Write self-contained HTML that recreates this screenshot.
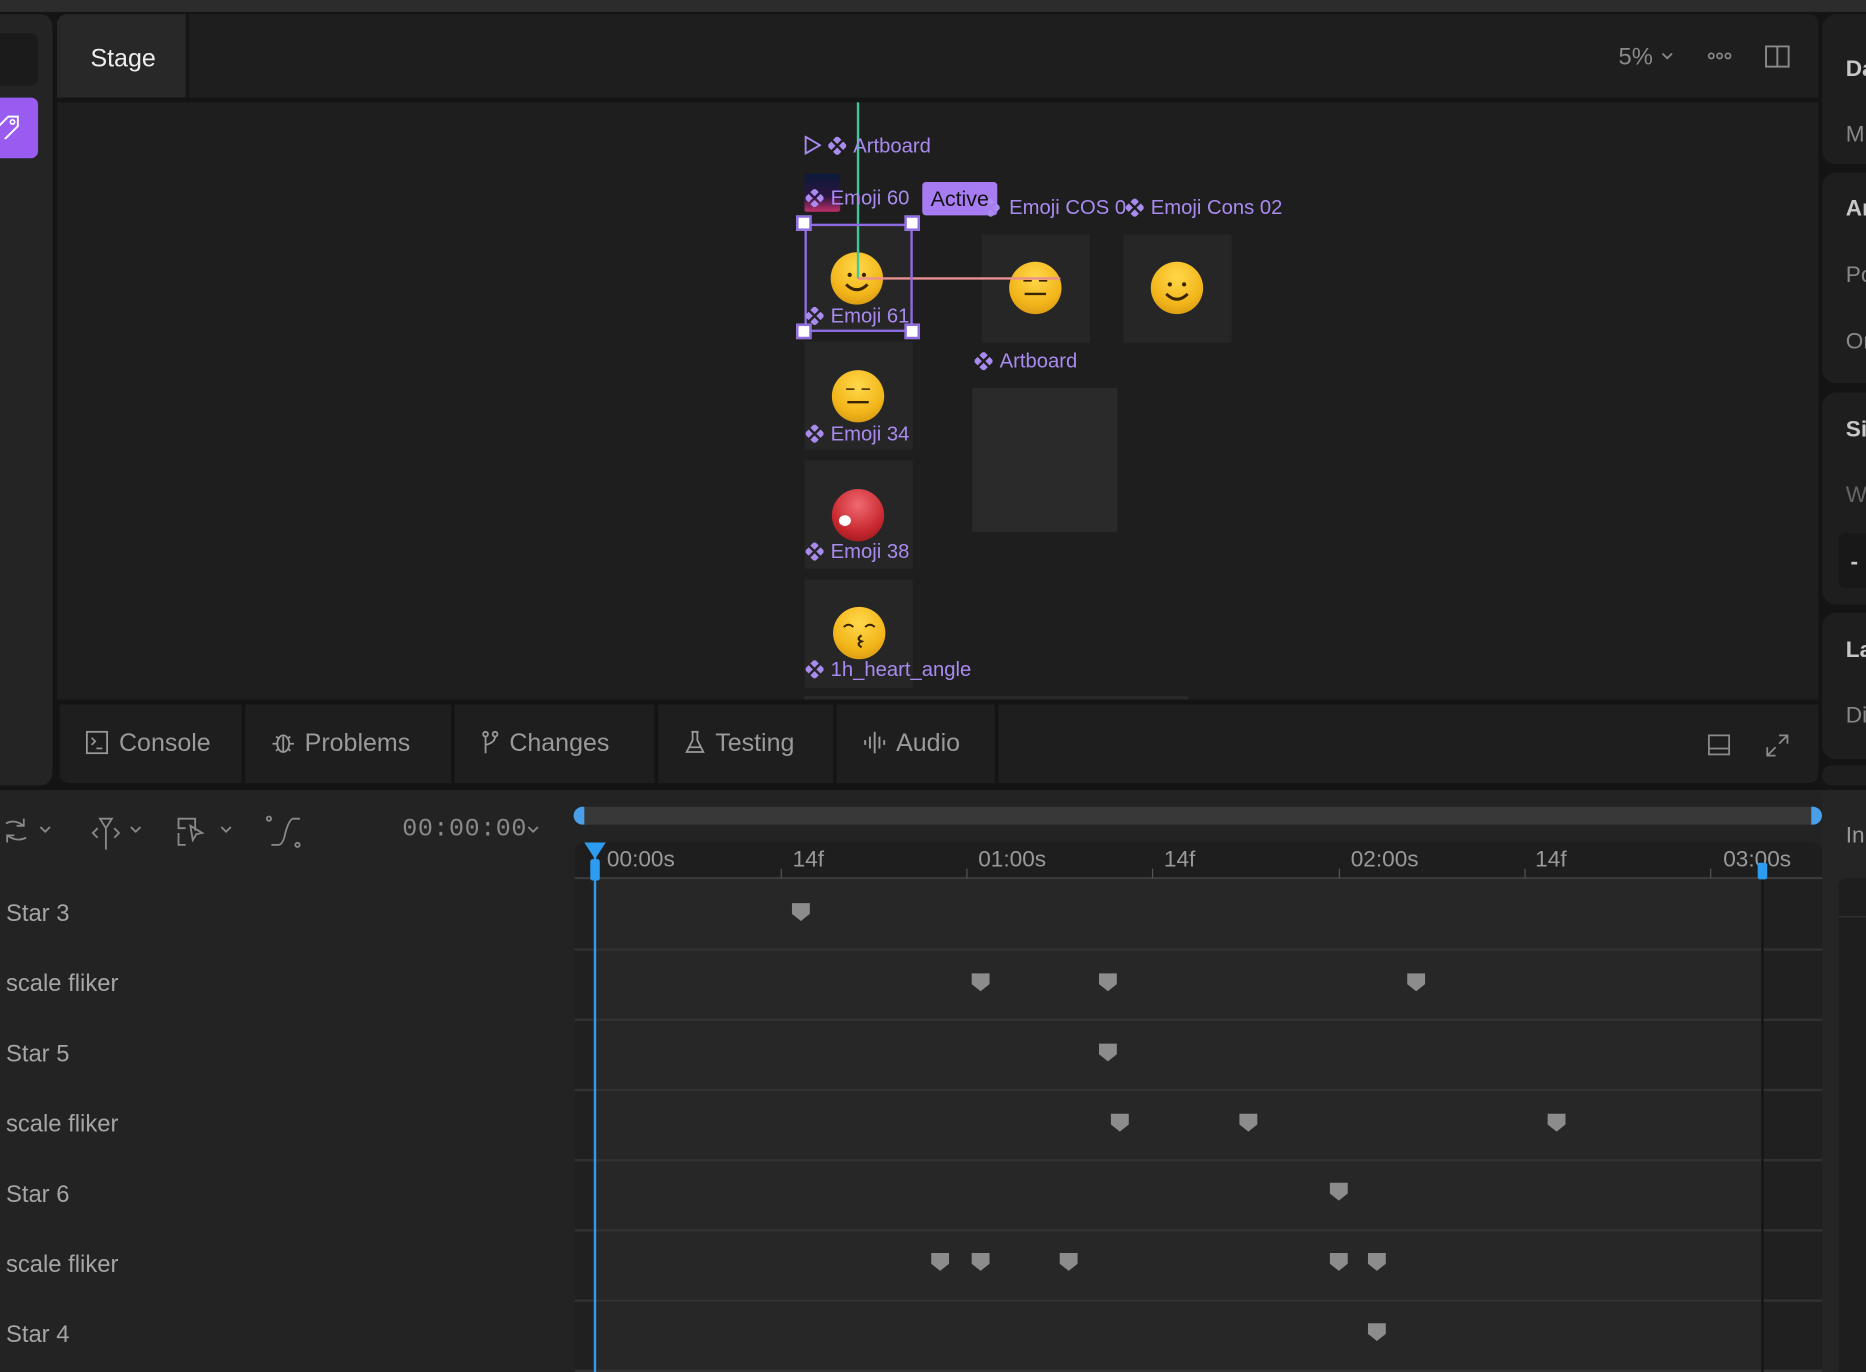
<!DOCTYPE html>
<html><head><meta charset="utf-8"><style>
*{box-sizing:border-box;margin:0;padding:0}
html,body{width:1866px;height:1372px;overflow:hidden;background:#141414}
#w{position:absolute;left:0;top:0;width:1568px;height:1153px;transform:scale(1.19005,1.18993);transform-origin:0 0;font-family:"Liberation Sans",sans-serif;background:#141414}
.a{position:absolute}
.lbl{position:absolute;color:#a98bef;font-size:17px;white-space:nowrap;line-height:18px}
.lbl svg{vertical-align:-2px;margin-right:6px}
.tile{position:absolute;background:#262626;width:91px;height:91px}
.emo{position:absolute;width:44px;height:44px;border-radius:50%;background:radial-gradient(circle at 50% 30%,#ffd84a,#f2b51a 60%,#c98a10)}
.tab{position:absolute;top:592px;height:66px;background:#1e1e1e;color:#9a9a9a;font-size:21px;line-height:66px;padding-left:22px}
.tab svg{vertical-align:-3px;margin-right:8px}
.row{position:absolute;left:0;width:1531px;height:59px;font-size:20px;color:#a5a5a5}
.rl{position:absolute;left:5px;top:19px}
.rt{position:absolute;top:712px;color:#9a9a9a;font-size:19px}
.tk{position:absolute;top:730px;width:1px;height:8px;background:#555}
.rp{position:absolute;left:1531px;width:60px;background:#1e1e1e;border-radius:12px 0 0 12px}
.rp span{position:absolute;left:20px;font-size:19px;color:#888}
.rp b{position:absolute;left:20px;font-size:19px;color:#c8c8c8}
</style></head><body><div id="w">
<div class="a" style="left:0;top:0;width:1568px;height:10px;background:#2c2c2c"></div>
<div class="a" style="left:0;top:12px;width:44px;height:648px;background:#242424;border-radius:0 10px 10px 0"></div>
<div class="a" style="left:0;top:28px;width:32px;height:44px;background:#1b1b1b;border-radius:0 6px 6px 0"></div>
<div class="a" style="left:0;top:82px;width:32px;height:51px;background:#9a5cf0;border-radius:0 6px 6px 0"></div>
<svg class="a" style="left:0;top:97px" width="18" height="20" viewBox="0 0 18 20"><path d="M-4 12 L7 1 L15 1 L15 9 L4 20" fill="none" stroke="#fff" stroke-width="1.6"/><circle cx="10.5" cy="5.5" r="1.8" fill="none" stroke="#fff" stroke-width="1.4"/></svg>
<div class="a" style="left:48px;top:12px;width:1480px;height:648px;background:#1e1e1e;border-radius:8px"></div>
<div class="a" style="left:48px;top:12px;width:108px;height:70px;background:#282828;border-radius:8px 0 0 0;color:#eee;font-size:21px;line-height:76px;padding-left:28px">Stage</div>
<div class="a" style="left:156px;top:12px;width:3px;height:70px;background:#161616"></div>
<div class="a" style="left:48px;top:82px;width:1480px;height:4px;background:#141414"></div>
<div class="a" style="left:1360px;top:37px;color:#8a8a8a;font-size:20px">5%</div>
<svg class="a" style="left:1396px;top:43px" width="10" height="8"><path d="M1 2 L5 6 L9 2" fill="none" stroke="#8a8a8a" stroke-width="1.5"/></svg>
<svg class="a" style="left:1434px;top:43px" width="22" height="8"><circle cx="4" cy="4" r="2.2" fill="none" stroke="#8a8a8a" stroke-width="1.4"/><circle cx="11" cy="4" r="2.2" fill="none" stroke="#8a8a8a" stroke-width="1.4"/><circle cx="18" cy="4" r="2.2" fill="none" stroke="#8a8a8a" stroke-width="1.4"/></svg>
<svg class="a" style="left:1483px;top:38px" width="22" height="20"><rect x="1" y="1" width="19" height="17" fill="none" stroke="#8a8a8a" stroke-width="1.6"/><line x1="10.5" y1="1" x2="10.5" y2="18" stroke="#8a8a8a" stroke-width="1.6"/></svg>
<div class="tile" style="left:676px;top:188px"></div>
<div class="tile" style="left:676px;top:287px"></div>
<div class="tile" style="left:676px;top:387px"></div>
<div class="tile" style="left:676px;top:487px"></div>
<div class="tile" style="left:825px;top:197px"></div>
<div class="tile" style="left:944px;top:197px"></div>
<div class="a" style="left:817px;top:326px;width:122px;height:121px;background:#2a2a2a"></div>
<div class="a" style="left:676px;top:585px;width:322px;height:3px;background:#2a2a2a"></div>
<div class="a" style="left:676px;top:146px;width:30px;height:32px;background:linear-gradient(#0c1a3a,#2a1540 60%,#c0306a);border-radius:2px"></div>
<div class="emo" style="left:698px;top:212px"></div>
<div class="emo" style="left:848px;top:220px"></div>
<div class="emo" style="left:967px;top:220px"></div>
<div class="emo" style="left:699px;top:311px"></div>
<div class="emo" style="left:700px;top:510px"></div>
<div class="emo" style="left:699px;top:411px;background:radial-gradient(circle at 50% 30%,#f06a70,#c8282f 60%,#8a1418)"></div>
<div class="a" style="left:705px;top:433px;width:10px;height:9px;background:#fff;border-radius:50%"></div>
<svg class="a" style="left:698px;top:212px" width="44" height="44"><path d="M13 27 Q22 36 31 27" fill="none" stroke="#3a2500" stroke-width="2.5"/><circle cx="16" cy="19" r="1.8" fill="#3a2500"/><circle cx="28" cy="19" r="1.8" fill="#3a2500"/></svg>
<svg class="a" style="left:848px;top:220px" width="44" height="44"><line x1="13" y1="27" x2="31" y2="27" stroke="#3a2500" stroke-width="2"/><path d="M12 16h7M25 16h7" stroke="#3a2500" stroke-width="1.3"/></svg>
<svg class="a" style="left:967px;top:220px" width="44" height="44"><path d="M13 27 Q22 36 31 27" fill="none" stroke="#3a2500" stroke-width="2.5"/><circle cx="16" cy="19" r="1.8" fill="#3a2500"/><circle cx="28" cy="19" r="1.8" fill="#3a2500"/></svg>
<svg class="a" style="left:699px;top:311px" width="44" height="44"><line x1="13" y1="27" x2="31" y2="27" stroke="#3a2500" stroke-width="2"/><path d="M12 16h7M25 16h7" stroke="#3a2500" stroke-width="1.3"/></svg>
<svg class="a" style="left:700px;top:510px" width="44" height="44"><path d="M9 17 Q13 13 17 17M27 17 Q31 13 35 17" fill="none" stroke="#3a2500" stroke-width="1.6"/><path d="M24 24 Q19 27 24 29 Q19 31 24 34" fill="none" stroke="#3a2500" stroke-width="1.8"/></svg>
<div class="a" style="left:720px;top:86px;width:2px;height:148px;background:#3ec79a"></div>
<div class="a" style="left:721px;top:233px;width:170px;height:2px;background:#e99090"></div>
<div class="a" style="left:676px;top:188px;width:91px;height:91px;border:2px solid #8e6be0"></div>
<div class="a" style="left:669px;top:181px;width:13px;height:13px;background:#fff;border:2px solid #8e6be0"></div>
<div class="a" style="left:760px;top:181px;width:13px;height:13px;background:#fff;border:2px solid #8e6be0"></div>
<div class="a" style="left:669px;top:272px;width:13px;height:13px;background:#fff;border:2px solid #8e6be0"></div>
<div class="a" style="left:760px;top:272px;width:13px;height:13px;background:#fff;border:2px solid #8e6be0"></div>
<svg width="0" height="0" style="position:absolute"><defs><g id="dm"><rect x="5" y="0" width="5" height="5" transform="rotate(45 7.5 2.5)"/><rect x="0" y="5" width="5" height="5" transform="rotate(45 2.5 7.5)"/><rect x="10" y="5" width="5" height="5" transform="rotate(45 12.5 7.5)"/><rect x="5" y="10" width="5" height="5" transform="rotate(45 7.5 12.5)"/></g></defs></svg>
<div class="lbl" style="left:676px;top:114px"><svg width="14" height="16"><path d="M1 1 L13 8 L1 15Z" fill="none" stroke="#a98bef" stroke-width="1.6"/></svg><svg width="15" height="15" fill="#a98bef"><use href="#dm"/></svg>Artboard</div>
<div class="lbl" style="left:677px;top:158px"><svg width="15" height="15" fill="#a98bef"><use href="#dm"/></svg>Emoji 60</div>
<div class="a" style="left:775px;top:153px;width:63px;height:28px;background:#a77cf2;border-radius:3px;color:#111;font-size:18px;line-height:28px;text-align:center">Active</div>
<div class="lbl" style="left:830px;top:166px"><svg width="10" height="15" fill="#a98bef" style="margin-right:8px"><use href="#dm" x="-5"/></svg>Emoji COS 0</div>
<div class="lbl" style="left:946px;top:166px"><svg width="15" height="15" fill="#a98bef"><use href="#dm"/></svg>Emoji Cons 02</div>
<div class="lbl" style="left:677px;top:257px"><svg width="15" height="15" fill="#a98bef"><use href="#dm"/></svg>Emoji 61</div>
<div class="lbl" style="left:819px;top:295px"><svg width="15" height="15" fill="#a98bef"><use href="#dm"/></svg>Artboard</div>
<div class="lbl" style="left:677px;top:356px"><svg width="15" height="15" fill="#a98bef"><use href="#dm"/></svg>Emoji 34</div>
<div class="lbl" style="left:677px;top:455px"><svg width="15" height="15" fill="#a98bef"><use href="#dm"/></svg>Emoji 38</div>
<div class="lbl" style="left:677px;top:554px"><svg width="15" height="15" fill="#a98bef"><use href="#dm"/></svg>1h_heart_angle</div>
<div class="a" style="left:48px;top:588px;width:1480px;height:72px;background:#141414;border-radius:0 0 8px 8px"></div>
<div class="tab" style="left:50px;width:153px;border-radius:0 0 0 8px"><svg width="20" height="20"><rect x="1" y="1" width="17" height="18" fill="none" stroke="#999" stroke-width="1.5"/><path d="M5 6 L8 9 L5 12 M9 15h5" fill="none" stroke="#999" stroke-width="1.4"/></svg>Console</div>
<div class="tab" style="left:206px;width:173px"><svg width="20" height="20" fill="none" stroke="#999" stroke-width="1.5"><ellipse cx="10" cy="11" rx="5" ry="7"/><path d="M5 11H1M15 11h4M4 5l3 2M16 5l-3 2M4 17l2-2M16 17l-2-2M10 5v13"/></svg>Problems</div>
<div class="tab" style="left:382px;width:168px"><svg width="16" height="20" fill="none" stroke="#999" stroke-width="1.5"><circle cx="4" cy="3" r="2"/><circle cx="12" cy="3" r="2"/><path d="M4 5v14M12 5 Q12 10 4 12"/></svg>Changes</div>
<div class="tab" style="left:553px;width:147px"><svg width="18" height="20" fill="none" stroke="#999" stroke-width="1.5"><path d="M6 1h6M7 1v7L2 18h14L11 8V1"/><path d="M4 14h10" /></svg>Testing</div>
<div class="tab" style="left:703px;width:133px"><svg width="20" height="20" stroke="#999" stroke-width="1.6"><path d="M2 8v4M6 5v10M10 1v18M14 5v10M18 8v4"/></svg>Audio</div>
<div class="a" style="left:839px;top:592px;width:689px;height:66px;background:#1e1e1e;border-radius:0 0 8px 0"></div>
<svg class="a" style="left:1435px;top:617px" width="19" height="18"><rect x="1" y="1" width="17" height="16" fill="none" stroke="#8a8a8a" stroke-width="1.5"/><line x1="1" y1="12" x2="18" y2="12" stroke="#8a8a8a" stroke-width="1.5"/></svg>
<svg class="a" style="left:1484px;top:617px" width="19" height="19" fill="none" stroke="#8a8a8a" stroke-width="1.5"><path d="M11 1h7v7M18 1l-7 7M8 18H1v-7M1 18l7-7"/></svg>
<div class="rp" style="top:12px;height:126px"><b style="top:36px">Da</b><span style="top:91px">M</span></div>
<div class="rp" style="top:145px;height:177px"><b style="top:20px">Ar</b><span style="top:76px">Po</span><span style="top:132px">Or</span></div>
<div class="rp" style="top:330px;height:178px"><b style="top:21px">Si</b><span style="top:76px;color:#666">W</span><div style="position:absolute;left:14px;top:118px;width:40px;height:46px;background:#181818;border-radius:6px"></div><b style="top:132px;left:24px">-</b></div>
<div class="rp" style="top:515px;height:123px"><b style="top:21px">La</b><span style="top:76px">Di</span></div>
<div class="rp" style="top:643px;height:17px"></div>
<div class="a" style="left:0;top:664px;width:1568px;height:489px;background:#232323"></div>
<div class="a" style="left:1531px;top:664px;width:37px;height:489px;background:#252525"></div>
<div class="a" style="left:1545px;top:738px;width:23px;height:415px;background:#1e1e1e;border-radius:6px 0 0 0"></div>
<div class="a" style="left:1545px;top:770px;width:23px;height:1px;background:#333"></div>
<div class="a" style="left:1551px;top:692px;font-size:19px;color:#999">In</div>
<svg class="a" style="left:0;top:684px" width="460" height="30" fill="none" stroke="#8a8a8a" stroke-width="1.5">
<path d="M5 8 Q12 4 20 10 M20 4v6h-6 M22 20 Q14 24 6 18 M6 24v-6h6"/><path d="M34 11l4 4 4-4"/>
<path d="M84 4h10l-5 8zM89 12v20M82 12l-4 4 4 4M96 12l4 4-4 4"/><path d="M110 11l4 4 4-4"/>
<path d="M164 14V4h-14v8h6M150 16v10h6M160 10l10 6-5 1-3 5z"/><path d="M186 11l4 4 4-4"/>
<path d="M228 26h6 Q238 26 240 15 Q243 5 246 4h6"/><circle cx="226" cy="4" r="1.8"/><circle cx="250" cy="26" r="1.8"/>
<path d="M444 11l4 4 4-4"/>
</svg>
<div class="a" style="left:338px;top:686px;font-family:'Liberation Mono',monospace;font-size:21px;color:#8a8a8a;letter-spacing:0.5px">00:00:00</div>
<div class="a" style="left:483px;top:678px;width:1047px;height:15px;background:#383838;border-radius:8px"></div>
<div class="a" style="left:482px;top:678px;width:9px;height:15px;background:#4aa0e8;border-radius:8px 0 0 8px"></div>
<div class="a" style="left:1522px;top:678px;width:9px;height:15px;background:#4aa0e8;border-radius:0 8px 8px 0"></div>
<div class="a" style="left:483px;top:708px;width:1048px;height:30px;background:#1e1e1e;border-radius:8px 8px 0 0"></div>
<div class="a" style="left:483px;top:737px;width:1048px;height:2px;background:#3a3a3a"></div>
<div class="rt" style="left:510px">00:00s</div><div class="rt" style="left:666px">14f</div><div class="rt" style="left:822px">01:00s</div><div class="rt" style="left:978px">14f</div><div class="rt" style="left:1135px">02:00s</div><div class="rt" style="left:1290px">14f</div><div class="rt" style="left:1448px">03:00s</div>
<div class="tk" style="left:656px"></div><div class="tk" style="left:812px"></div><div class="tk" style="left:968px"></div><div class="tk" style="left:1125px"></div><div class="tk" style="left:1281px"></div><div class="tk" style="left:1437px"></div>
<div class="a" style="left:483px;top:739px;width:1048px;height:414px;background:#272727"></div>
<div class="a" style="left:483px;top:739px;width:15px;height:414px;background:#202020"></div>
<div class="a" style="left:1481px;top:739px;width:50px;height:414px;background:#202020"></div>
<div class="row" style="top:738px"><span class="rl">Star 3</span></div>
<div class="row" style="top:797px"><span class="rl">scale fliker</span></div>
<div class="row" style="top:856px"><span class="rl">Star 5</span></div>
<div class="row" style="top:915px"><span class="rl">scale fliker</span></div>
<div class="row" style="top:974px"><span class="rl">Star 6</span></div>
<div class="row" style="top:1033px"><span class="rl">scale fliker</span></div>
<div class="row" style="top:1092px"><span class="rl">Star 4</span></div>
<div class="a" style="left:483px;top:797px;width:1048px;height:2px;background:#323232"></div>
<div class="a" style="left:483px;top:856px;width:1048px;height:2px;background:#323232"></div>
<div class="a" style="left:483px;top:915px;width:1048px;height:2px;background:#323232"></div>
<div class="a" style="left:483px;top:974px;width:1048px;height:2px;background:#323232"></div>
<div class="a" style="left:483px;top:1033px;width:1048px;height:2px;background:#323232"></div>
<div class="a" style="left:483px;top:1092px;width:1048px;height:2px;background:#323232"></div>
<div class="a" style="left:483px;top:1151px;width:1048px;height:2px;background:#323232"></div>
<div class="a" style="left:1480px;top:739px;width:2px;height:414px;background:#151515"></div>
<svg class="a" style="left:0;top:0" width="1568" height="1153"><defs><polygon id="k" points="-7.5,0 7.5,0 7.5,9 0,15 -7.5,9" fill="#8c8c8c"/></defs>
<use href="#k" x="673" y="759"/>
<use href="#k" x="824" y="818"/><use href="#k" x="931" y="818"/><use href="#k" x="1190" y="818"/>
<use href="#k" x="931" y="877"/>
<use href="#k" x="941" y="936"/><use href="#k" x="1049" y="936"/><use href="#k" x="1308" y="936"/>
<use href="#k" x="1125" y="994"/>
<use href="#k" x="790" y="1053"/><use href="#k" x="824" y="1053"/><use href="#k" x="898" y="1053"/><use href="#k" x="1125" y="1053"/><use href="#k" x="1157" y="1053"/>
<use href="#k" x="1157" y="1112"/>
<rect x="499" y="708" width="2" height="445" fill="#2d9cf0"/>
<polygon points="491,708 509,708 500,722" fill="#2d9cf0"/>
<rect x="496" y="722" width="8" height="18" rx="2" fill="#2d9cf0"/>
<rect x="1477" y="725" width="8" height="14" rx="2" fill="#2d9cf0"/>
</svg>
</div></body></html>
